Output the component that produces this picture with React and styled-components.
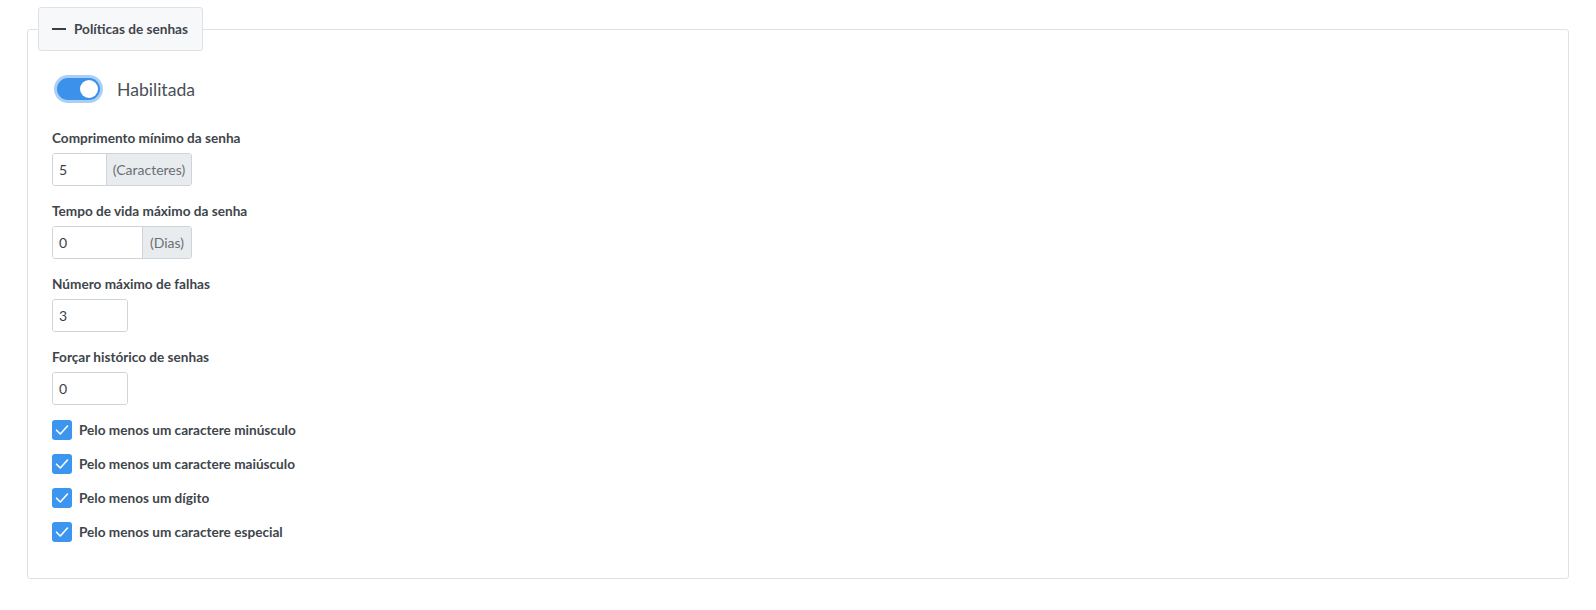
import React from "react";
import styled, { createGlobalStyle } from "styled-components";

const Global = createGlobalStyle`
  html, body { margin: 0; padding: 0; background: #fff; }
  body { font-family: Lato, "Open Sans", sans-serif; color: #3a3f44; }
  * { box-sizing: border-box; }
`;

const Page = styled.div`
  padding: 7px 27px 20px;
`;

const Fieldset = styled.fieldset`
  margin: 0;
  padding: 0 0 36px;
  border: 1px solid #dfe1e4;
  border-radius: 3px;
  min-width: 0;
`;

const Legend = styled.legend`
  margin-left: 10px;
  padding: 0 14px 0 13px;
  height: 44px;
  display: flex;
  align-items: center;
  gap: 8px;
  background: #f7f8fa;
  border: 1px solid #dfe1e4;
  border-radius: 3px;
  font-size: 13.6px;
  font-weight: 700;
  color: #40454b;
`;

const Dash = styled.span`
  display: inline-block;
  width: 14px;
  height: 2px;
  background: #3a3f44;
`;

const Body = styled.div`
  padding: 23px 24px 0;
  display: flex;
  flex-direction: column;
`;

const SwitchRow = styled.label`
  display: flex;
  align-items: center;
  height: 30px;
  margin-bottom: 24px;
  gap: 17px;
  font-size: 17.6px;
  color: #4a4f55;
`;

const Track = styled.span`
  margin-left: 5px;
  width: 43px;
  height: 22px;
  border-radius: 11px;
  background: #3c91ea;
  box-shadow: 0 0 0 3px #abd0f6;
  display: flex;
  align-items: center;
  justify-content: ${(p) => (p.$on ? "flex-end" : "flex-start")};
  padding: 0 2px;
`;

const Knob = styled.span`
  width: 18px;
  height: 18px;
  border-radius: 50%;
  background: #fff;
`;

const Field = styled.div`
  display: flex;
  flex-direction: column;
  align-items: flex-start;
  margin-bottom: 15px;
`;

const Label = styled.label`
  font-size: 13.6px;
  line-height: 20px;
  font-weight: 700;
  color: #40454b;
  margin-bottom: 5px;
`;

const Group = styled.div`
  display: flex;
  height: 33px;
  border: 1px solid #cfd4d9;
  border-radius: 3px;
  overflow: hidden;
`;

const Input = styled.div`
  width: ${(p) => p.$w}px;
  display: flex;
  align-items: center;
  padding-left: 6px;
  font-size: 14px;
  color: #3a3f44;
  background: #fff;
`;

const Addon = styled.div`
  width: ${(p) => p.$w}px;
  display: flex;
  align-items: center;
  justify-content: center;
  background: #e9ecef;
  border-left: 1px solid #cfd4d9;
  font-size: 14px;
  color: #6a6f75;
`;

const Checks = styled.div`
  display: flex;
  flex-direction: column;
  gap: 14px;
`;

const CheckRow = styled.label`
  display: flex;
  align-items: center;
  gap: 7px;
  height: 20px;
  font-size: 13.6px;
  font-weight: 700;
  color: #40454b;
`;

const Box = styled.span`
  width: 20px;
  height: 20px;
  border-radius: 3px;
  background: #3c95ee;
  display: flex;
  align-items: center;
  justify-content: center;
`;

const Check = () => (
  <svg width="14" height="14" viewBox="0 0 14 14" fill="none">
    <path d="M1.5 7.2 L5.3 11 L12.5 3" stroke="#fff" strokeWidth="1.6" strokeLinecap="round" strokeLinejoin="round" />
  </svg>
);

const fields = [
  { label: "Comprimento mínimo da senha", value: "5", w: 53, addon: "(Caracteres)", aw: 85 },
  { label: "Tempo de vida máximo da senha", value: "0", w: 89, addon: "(Dias)", aw: 49 },
  { label: "Número máximo de falhas", value: "3", w: 74 },
  { label: "Forçar histórico de senhas", value: "0", w: 74 },
];

const checks = [
  "Pelo menos um caractere minúsculo",
  "Pelo menos um caractere maiúsculo",
  "Pelo menos um dígito",
  "Pelo menos um caractere especial",
];

export default function App() {
  return (
    <>
      <Global />
      <Page>
        <Fieldset>
          <Legend>
            <Dash />
            Políticas de senhas
          </Legend>
          <Body>
            <SwitchRow>
              <Track $on>
                <Knob />
              </Track>
              Habilitada
            </SwitchRow>
            {fields.map((f) => (
              <Field key={f.label}>
                <Label>{f.label}</Label>
                <Group>
                  <Input $w={f.w}>{f.value}</Input>
                  {f.addon && <Addon $w={f.aw}>{f.addon}</Addon>}
                </Group>
              </Field>
            ))}
            <Checks>
              {checks.map((c) => (
                <CheckRow key={c}>
                  <Box>
                    <Check />
                  </Box>
                  {c}
                </CheckRow>
              ))}
            </Checks>
          </Body>
        </Fieldset>
      </Page>
    </>
  );
}
